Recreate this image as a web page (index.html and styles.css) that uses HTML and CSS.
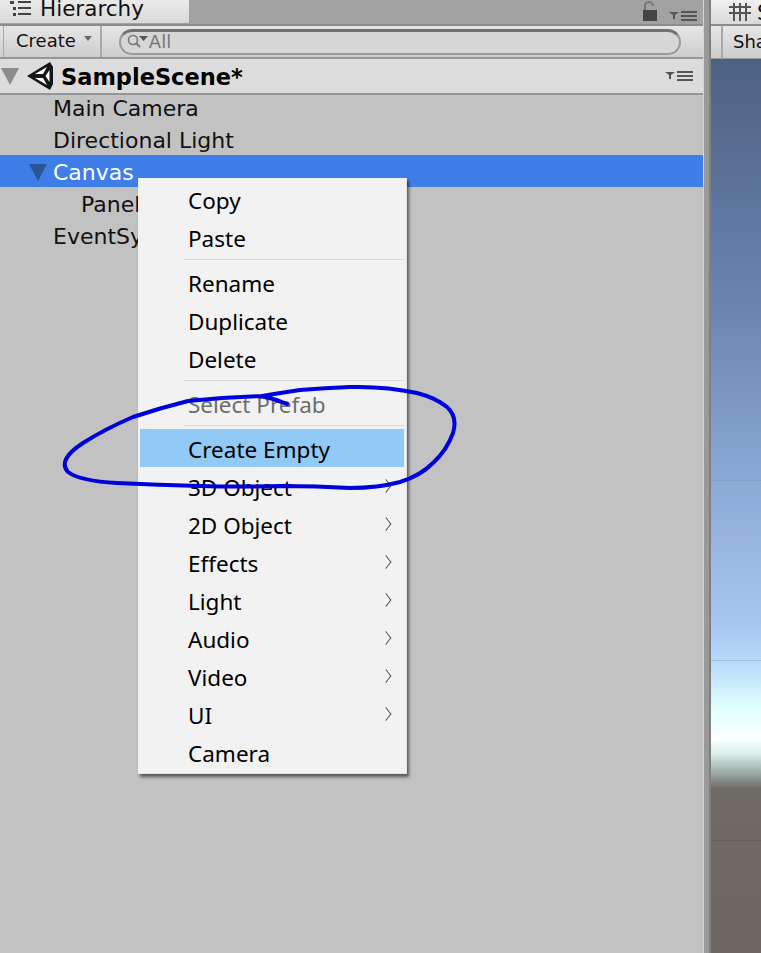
FILE: index.html
```html
<!DOCTYPE html>
<html lang="en">
<head>
    <meta charset="UTF-8">
    <title>Hierarchy</title>
    <link rel="stylesheet" href="styles.css">
</head>
<body>
    <div class="editor">
        <section class="hierarchy">
            <div class="tab-row">
                <div class="tab">
                    <svg class="list-icon" width="22" height="16" viewBox="0 0 22 16">
                        <path d="M0 1h4v3H0zM3 7h3v3H3zM3 13h3v3H3zM8 1h13v2H8zM8 7h13v2H8zM8 13h13v2H8z" fill="#444"/>
                    </svg>
                    <span>Hierarchy</span>
                </div>
                <div class="tab-tools">
                    <svg width="16" height="20" viewBox="0 0 16 20">
                        <path d="M3 9V5a4 4 0 0 1 8 0" fill="none" stroke="#777" stroke-width="2"/>
                        <rect x="1" y="9" width="14" height="11" fill="#444"/>
                    </svg>
                    <svg width="28" height="10" viewBox="0 0 28 10">
                        <path d="M0 1h10L6 4v4H4V4zM12 0h16v2H12zM12 4h16v2H12zM12 8h16v2H12z" fill="#555"/>
                    </svg>
                </div>
            </div>
            <div class="toolbar">
                <div class="create-btn">Create <span class="caret"></span></div>
                <div class="search">
                    <svg width="22" height="16" viewBox="0 0 22 16">
                        <circle cx="6" cy="7" r="4.500" fill="none" stroke="#777" stroke-width="1.600"/>
                        <path d="M9 10l4 4" stroke="#777" stroke-width="2"/>
                        <path d="M12 3h9l-4.500 5z" fill="#555"/>
                    </svg>
                    <span>All</span>
                </div>
            </div>
            <div class="scene-row">
                <span class="fold fold-grey"></span>
                <svg class="unity-logo" width="27" height="30" viewBox="0 0 27 30">
                    <path d="M0 15L23 1l3 5v17l-3 6z" fill="#161616"/>
                    <path d="M8 13L20 6l-4 7zM22.500 9v12L18.500 15zM8 17h8l4 7z" fill="#fff"/>
                </svg>
                <span class="scene-name">SampleScene*</span>
                <svg class="scene-menu" width="28" height="10" viewBox="0 0 28 10">
                    <path d="M0 1h10L6 4v4H4V4zM12 0h16v2H12zM12 4h16v2H12zM12 8h16v2H12z" fill="#555"/>
                </svg>
            </div>
            <ul class="tree">
                <li class="tree-row">Main Camera</li>
                <li class="tree-row">Directional Light</li>
                <li class="tree-row selected"><span class="fold fold-blue"></span>Canvas</li>
                <li class="tree-row child">Panel</li>
                <li class="tree-row">EventSystem</li>
            </ul>
        </section>
        <div class="gutter"></div>
        <section class="scene">
            <div class="scene-tab">
                <svg class="grid-icon" width="22" height="18" viewBox="0 0 22 18">
                    <path d="M5 0v18M11 0v18M17 0v18M0 4h22M0 10h22" stroke="#555" stroke-width="2" fill="none"/>
                </svg>
                <span>Scene</span>
            </div>
            <div class="scene-toolbar"><span>Shaded</span></div>
            <div class="viewport"></div>
        </section>
    </div>

    <div class="menu">
        <div class="menu-item">Copy</div>
        <div class="menu-item">Paste</div>
        <div class="menu-sep"></div>
        <div class="menu-item">Rename</div>
        <div class="menu-item">Duplicate</div>
        <div class="menu-item">Delete</div>
        <div class="menu-sep"></div>
        <div class="menu-item disabled">Select Prefab</div>
        <div class="menu-sep"></div>
        <div class="menu-item hover">Create Empty</div>
        <div class="menu-item arrow">3D Object</div>
        <div class="menu-item arrow">2D Object</div>
        <div class="menu-item arrow">Effects</div>
        <div class="menu-item arrow">Light</div>
        <div class="menu-item arrow">Audio</div>
        <div class="menu-item arrow">Video</div>
        <div class="menu-item arrow">UI</div>
        <div class="menu-item">Camera</div>
    </div>

    <svg class="scribble" width="761" height="953" viewBox="0 0 761 953">
        <path d="M262 396Q225 397 188 401Q160 408 133 417Q105 429 83 443Q57 460 68 472Q80 481 117 483Q158 485 200 486Q241 487 283 486Q316 486 350 488Q378 488 400 482Q420 476 433 463Q447 450 453 433Q458 417 447 407Q436 398 417 393Q385 386 350 387Q325 388 300 390Q280 393 262 396Q275 399 287 404" fill="none" stroke="#0000dc" stroke-width="4" stroke-linecap="round" stroke-linejoin="round"/>
    </svg>
</body>
</html>
```

FILE: styles.css
```css
html, body {
    margin: 0;
    height: 100%;
    overflow: hidden;
}
body {
    font-family: "DejaVu Sans", Verdana, sans-serif;
    background-color: #c2c2c2;
    color: #111;
}
.editor {
    display: flex;
    height: 953px;
}

/* left panel */
.hierarchy {
    width: 703px;
    flex-shrink: 0;
    background-color: #c2c2c2;
}
.tab-row {
    display: flex;
    justify-content: space-between;
    height: 24px;
    background-color: #a2a2a2;
    border-bottom: 2px solid #8c8c8c;
}
.tab {
    display: flex;
    align-items: center;
    gap: 8px;
    width: 189px;
    height: 30px;
    margin-top: -7px;
    padding: 0 0 0 10px;
    box-sizing: border-box;
    background: linear-gradient(#f0f0f0, #d9d9d9);
    font-size: 21.500px;
    overflow: hidden;
}
.list-icon {
    flex-shrink: 0;
}
.tab-tools {
    display: flex;
    align-items: flex-end;
    gap: 11px;
    padding: 0 6px 3px 0;
}
.toolbar {
    display: flex;
    align-items: center;
    height: 31px;
    background: linear-gradient(#e6e6e6, #cdcdcd);
    border-bottom: 2px solid #969696;
}
.create-btn {
    display: flex;
    align-items: center;
    gap: 8px;
    height: 100%;
    margin-left: 3px;
    padding: 0 8px 2px 12px;
    box-sizing: border-box;
    border-left: 1px solid #a8a8a8;
    border-right: 2px solid #a8a8a8;
    font-size: 18px;
}
.caret {
    width: 0;
    height: 0;
    border-left: 4px solid transparent;
    border-right: 4px solid transparent;
    border-top: 5px solid #666;
    margin-bottom: 4px;
}
.search {
    display: flex;
    align-items: center;
    flex: 1;
    height: 26px;
    margin: 0 22px 0 17px;
    padding: 0 0 2px 6px;
    box-sizing: border-box;
    border: 2px solid #9a9a9a;
    border-top: 3px solid #707070;
    border-radius: 14px;
    background-color: #d6d6d6;
    color: #777;
    font-size: 18px;
}
.search svg {
    flex-shrink: 0;
}
.scene-row {
    display: flex;
    align-items: center;
    position: relative;
    z-index: 1;
    height: 34px;
    background-color: #dcdcdc;
    border-bottom: 2px solid #969696;
}
.fold {
    width: 0;
    height: 0;
    border-left: 9px solid transparent;
    border-right: 9px solid transparent;
    border-top: 17px solid #8c8c8c;
}
.fold-grey {
    margin-left: 1px;
}
.fold-blue {
    border-top-color: #2a5398;
    margin-right: 6px;
    margin-left: -24px;
}
.unity-logo {
    margin-left: 8px;
    flex-shrink: 0;
}
.scene-name {
    margin-left: 7px;
    padding-top: 2px;
    font-size: 22.500px;
    font-weight: bold;
    color: #000;
}
.scene-menu {
    margin-left: auto;
    margin-right: 10px;
}
.tree {
    list-style: none;
    margin: -4px 0 0;
    padding: 0;
}
.tree-row {
    display: flex;
    align-items: center;
    height: 32px;
    padding: 3px 0 0 53px;
    box-sizing: border-box;
    font-size: 22px;
}
.tree-row.selected {
    background-color: #3f7de8;
    color: #fff;
}
.tree-row.child {
    padding-left: 81px;
}

.gutter {
    width: 8px;
    flex-shrink: 0;
    box-sizing: border-box;
    background-color: #999;
    border-left: 1px solid #d6d6d6;
    border-right: 2px solid #808080;
}

/* right panel */
.scene {
    flex: 1;
    display: flex;
    flex-direction: column;
    min-width: 0;
    overflow: hidden;
}
.scene-tab {
    display: flex;
    align-items: center;
    gap: 6px;
    height: 24px;
    padding-left: 18px;
    background: linear-gradient(#f0f0f0, #d9d9d9);
    border-bottom: 2px solid #8c8c8c;
    font-size: 21.500px;
    white-space: nowrap;
}
.grid-icon {
    flex-shrink: 0;
}
.scene-toolbar {
    display: flex;
    align-items: center;
    height: 32px;
    padding-left: 10px;
    background: linear-gradient(#e6e6e6, #cdcdcd);
    border-bottom: 1px solid #969696;
    font-size: 18px;
    white-space: nowrap;
}
.scene-toolbar span {
    padding-left: 10px;
    line-height: 32px;
    border-left: 2px solid #a8a8a8;
}
.viewport {
    flex: 1;
    background:
        linear-gradient(rgba(110, 110, 110, 0.2), rgba(110, 110, 110, 0.2)) 0 61px / 100% 1px no-repeat,
        linear-gradient(rgba(110, 110, 110, 0.2), rgba(110, 110, 110, 0.2)) 0 241px / 100% 1px no-repeat,
        linear-gradient(rgba(110, 110, 110, 0.2), rgba(110, 110, 110, 0.2)) 0 421px / 100% 1px no-repeat,
        linear-gradient(rgba(110, 110, 110, 0.25), rgba(110, 110, 110, 0.25)) 0 601px / 100% 1px no-repeat,
        linear-gradient(rgba(70, 70, 70, 0.25), rgba(70, 70, 70, 0.25)) 0 781px / 100% 1px no-repeat,
        linear-gradient(#4c6283 0, #55698c 60px, #6884ae 240px, #8ba9d6 420px, #a8c7ee 570px, #bcdffc 610px, #e2ffff 650px, #fbffff 680px, #d8eee9 695px, #a3b1ad 712px, #6f6a66 730px, #6c6662 894px);
}

/* context menu */
.menu {
    position: absolute;
    left: 138px;
    top: 178px;
    width: 269px;
    padding: 2px;
    box-sizing: border-box;
    background-color: #f2f2f2;
    border: 1px solid #e4e4e4;
    border-width: 0 1px 1px 0;
    box-shadow: 2px 3px 3px rgba(0, 0, 0, 0.55);
    font-family: "Noto Sans", "Open Sans", sans-serif;
    font-size: 22.500px;
    color: #000;
}
.menu-item {
    position: relative;
    height: 38px;
    line-height: 42px;
    padding-left: 48px;
    white-space: nowrap;
}
.menu-item.disabled {
    color: #6d6d6d;
}
.menu-item.hover {
    background-color: #91c9f7;
}
.menu-item.arrow::after {
    content: "";
    position: absolute;
    right: 13px;
    top: 14px;
    width: 9px;
    height: 9px;
    border-top: 1.500px solid #444;
    border-right: 1.500px solid #444;
    transform: scaleX(0.75) rotate(45deg);
}
.menu-sep {
    height: 1px;
    margin: 3px 0 3px 44px;
    background-color: #d7d7d7;
}
.scribble {
    position: absolute;
    left: 0;
    top: 0;
    pointer-events: none;
}
```
